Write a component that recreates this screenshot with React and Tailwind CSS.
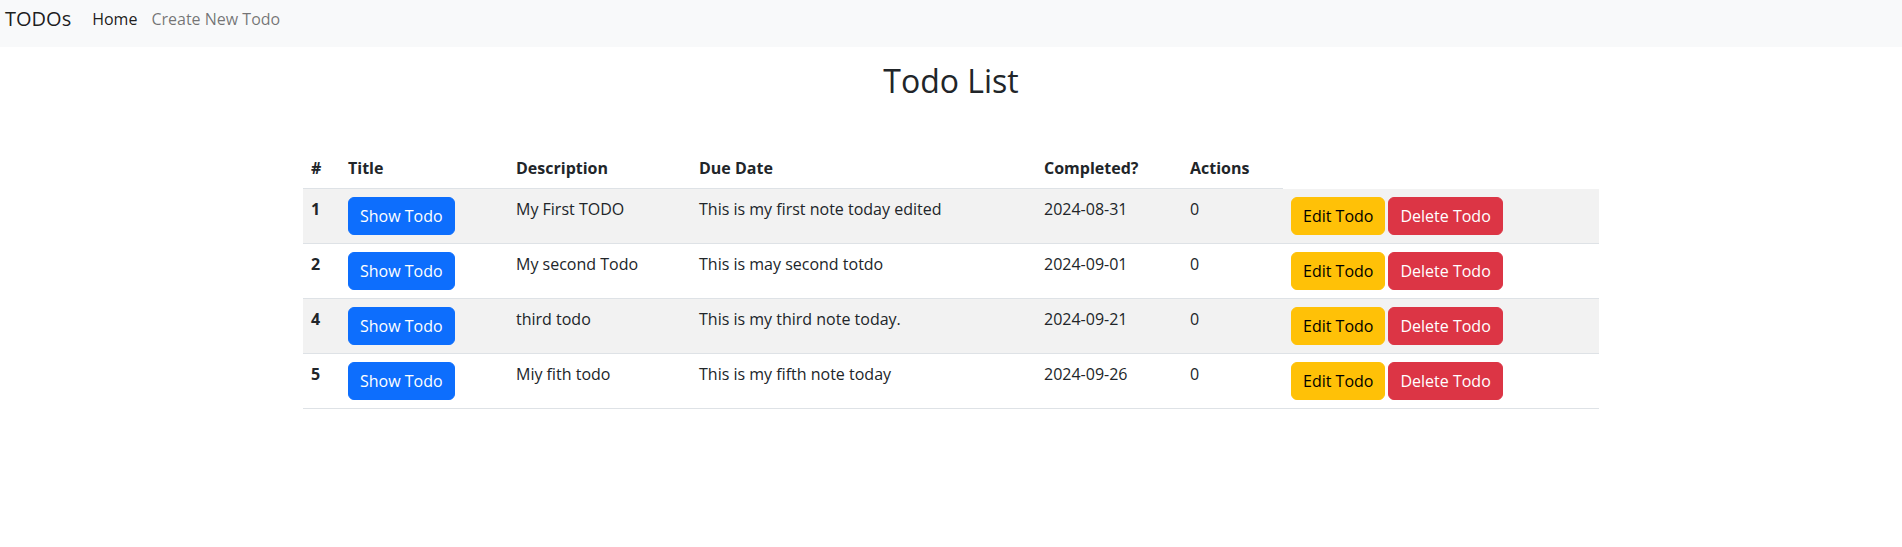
import React from "react";

const todos = [
  { id: 1, title: "My First TODO", desc: "This is my first note today edited", date: "2024-08-31", done: 0 },
  { id: 2, title: "My second Todo", desc: "This is may second totdo", date: "2024-09-01", done: 0 },
  { id: 4, title: "third todo", desc: "This is my third note today.", date: "2024-09-21", done: 0 },
  { id: 5, title: "Miy fith todo", desc: "This is my fifth note today", date: "2024-09-26", done: 0 },
];

export default function App() {
  return (
    <div className="min-h-[547px] bg-white font-['Open_Sans',sans-serif] text-[#212529]">
      <nav className="h-[47px] bg-[#f8f9fa]">
        <div className="flex h-[37px] items-center">
          <span className="ml-[5px] text-[20px] leading-[25px] text-black/90">TODOs</span>
          <span className="ml-[21px] text-base leading-6 text-black/90">Home</span>
          <span className="ml-[14px] text-base leading-6 text-black/55">Create New Todo</span>
        </div>
      </nav>
      <div className="mx-auto w-[1320px] px-3">
        <h2 className="mt-[15px] text-center text-[32px] leading-[38px] font-normal">Todo List</h2>
        <table className="mt-[48px] w-[1296px] table-fixed border-collapse text-base leading-6">
          <thead>
            <tr>
              <th className="w-[37px] border-b border-[#dee2e6] p-2 text-left font-bold">#</th>
              <th className="w-[168px] border-b border-[#dee2e6] p-2 text-left font-bold">Title</th>
              <th className="w-[183px] border-b border-[#dee2e6] p-2 text-left font-bold">Description</th>
              <th className="w-[345px] border-b border-[#dee2e6] p-2 text-left font-bold">Due Date</th>
              <th className="w-[146px] border-b border-[#dee2e6] p-2 text-left font-bold">Completed?</th>
              <th className="w-[101px] border-b border-[#dee2e6] p-2 text-left font-bold">Actions</th>
            </tr>
          </thead>
          <tbody>
            {todos.map((t, i) => (
              <tr key={t.id} className={i % 2 === 0 ? "bg-[#f2f2f2]" : "bg-white"}>
                <td className="border-b border-[#dee2e6] p-2 align-top font-bold">{t.id}</td>
                <td className="border-b border-[#dee2e6] p-2 align-top">
                  <button className="rounded-md border border-[#0d6efd] bg-[#0d6efd] px-[11px] py-1.5 text-base leading-6 text-white">
                    Show Todo
                  </button>
                </td>
                <td className="border-b border-[#dee2e6] p-2 align-top">{t.title}</td>
                <td className="border-b border-[#dee2e6] p-2 align-top">{t.desc}</td>
                <td className="border-b border-[#dee2e6] p-2 align-top">{t.date}</td>
                <td className="border-b border-[#dee2e6] p-2 align-top">{t.done}</td>
                <td className="border-b border-[#dee2e6] p-2 align-top">
                  <div className="flex gap-[3px]">
                    <button className="rounded-md border border-[#ffc107] bg-[#ffc107] px-[11px] py-1.5 text-base leading-6 text-black">
                      Edit Todo
                    </button>
                    <button className="rounded-md border border-[#dc3545] bg-[#dc3545] px-[11px] py-1.5 text-base leading-6 text-white">
                      Delete Todo
                    </button>
                  </div>
                </td>
              </tr>
            ))}
          </tbody>
        </table>
      </div>
    </div>
  );
}
